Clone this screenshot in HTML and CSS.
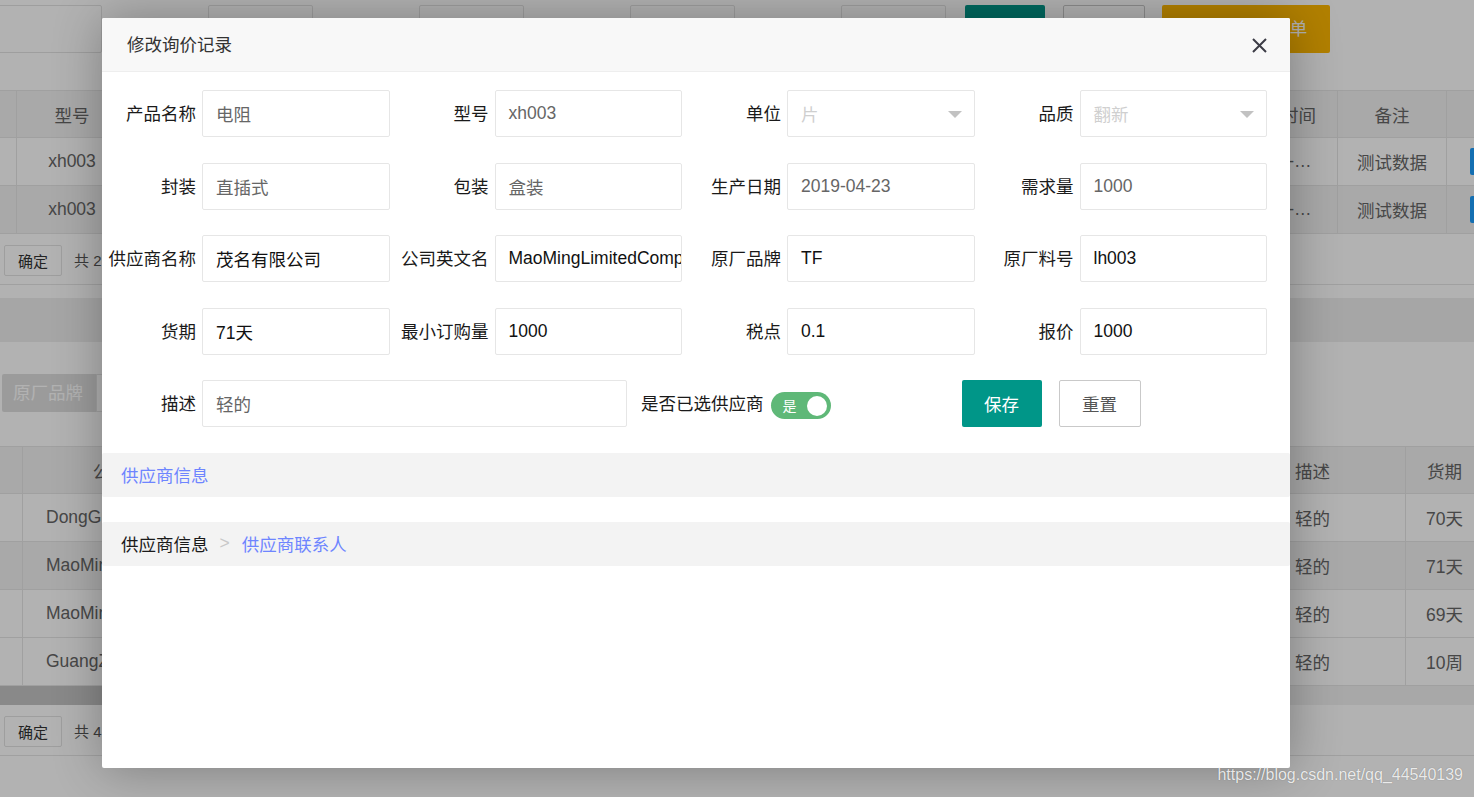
FILE: index.html
```html
<!DOCTYPE html>
<html lang="zh-CN">
<head>
<meta charset="utf-8">
<title>修改询价记录</title>
<link rel="stylesheet" href="styles.css">
</head>
<body>
<div class="page">
  <div class="toolbar">
    <div class="tb-input"></div>
    <div class="tb-label"></div>
    <div class="tb-input"></div>
    <div class="tb-label"></div>
    <div class="tb-input"></div>
    <div class="tb-label"></div>
    <div class="tb-input"></div>
    <div class="tb-label"></div>
    <div class="tb-input"></div>
    <div class="tb-btn teal"></div>
    <div class="tb-btn plain"></div>
    <div class="tb-btn warm">批量生成询价单</div>
  </div>
  <div class="gap-a"></div>

  <div class="tbl">
    <div class="tr th">
      <div class="td w17"></div>
      <div class="td w111">型号</div>
      <div class="td w531"></div>
      <div class="td w531"></div>
      <div class="td wtime">最后更新时间</div>
      <div class="td w109">备注</div>
      <div class="td wop"></div>
    </div>
    <div class="tr">
      <div class="td w17"></div>
      <div class="td w111">xh003</div>
      <div class="td w531"></div>
      <div class="td w531"></div>
      <div class="td wtime"><span class="ell">2019-04-23 10:21:35</span></div>
      <div class="td w109">测试数据</div>
      <div class="td wop"><span class="mini-btn">编辑</span></div>
    </div>
    <div class="tr hl">
      <div class="td w17"></div>
      <div class="td w111">xh003</div>
      <div class="td w531"></div>
      <div class="td w531"></div>
      <div class="td wtime"><span class="ell">2019-04-23 10:25:02</span></div>
      <div class="td w109">测试数据</div>
      <div class="td wop"><span class="mini-btn">编辑</span></div>
    </div>
  </div>

  <div class="pager">
    <span class="pg-btn">确定</span>
    <span class="pg-count">共 2</span>
  </div>
  <div class="gap-b"></div>
  <div class="band"></div>

  <div class="filter">
    <div class="filter-label">原厂品牌</div>
    <div class="filter-input"></div>
  </div>

  <div class="tbl">
    <div class="tr th">
      <div class="td w23"></div>
      <div class="td w228">公司英文名</div>
      <div class="td w1029"></div>
      <div class="td w126 left">描述</div>
      <div class="td w78">货期</div>
    </div>
    <div class="tr">
      <div class="td w23"></div>
      <div class="td w228 name">DongGuanLimitedCompany</div>
      <div class="td w1029"></div>
      <div class="td w126 left">轻的</div>
      <div class="td w78">70天</div>
    </div>
    <div class="tr hl">
      <div class="td w23"></div>
      <div class="td w228 name">MaoMingLimitedCompany</div>
      <div class="td w1029"></div>
      <div class="td w126 left">轻的</div>
      <div class="td w78">71天</div>
    </div>
    <div class="tr">
      <div class="td w23"></div>
      <div class="td w228 name">MaoMingLimitedCompany</div>
      <div class="td w1029"></div>
      <div class="td w126 left">轻的</div>
      <div class="td w78">69天</div>
    </div>
    <div class="tr">
      <div class="td w23"></div>
      <div class="td w228 name">GuangZhouLimitedCompany</div>
      <div class="td w1029"></div>
      <div class="td w126 left">轻的</div>
      <div class="td w78">10周</div>
    </div>
  </div>
  <div class="scroll"><div class="thumb"></div></div>
  <div class="pager">
    <span class="pg-btn">确定</span>
    <span class="pg-count">共 4</span>
  </div>
</div>

<div class="shade"></div>

<div class="modal">
  <div class="modal-head">
    <span class="modal-title">修改询价记录</span>
    <span class="close">
      <svg width="15" height="15" viewBox="0 0 15 15"><path d="M1 1 L14 14 M14 1 L1 14" stroke="#3c3c46" stroke-width="2" fill="none"/></svg>
    </span>
  </div>
  <div class="modal-body">
    <div class="form-grid">
      <div class="field"><span class="field-label">产品名称</span><div class="inp ro">电阻</div></div>
      <div class="field"><span class="field-label">型号</span><div class="inp ro">xh003</div></div>
      <div class="field"><span class="field-label">单位</span><div class="inp sel"><span>片</span><span class="arrow"></span></div></div>
      <div class="field"><span class="field-label">品质</span><div class="inp sel"><span>翻新</span><span class="arrow"></span></div></div>

      <div class="field"><span class="field-label">封装</span><div class="inp ro">直插式</div></div>
      <div class="field"><span class="field-label">包装</span><div class="inp ro">盒装</div></div>
      <div class="field"><span class="field-label">生产日期</span><div class="inp ro">2019-04-23</div></div>
      <div class="field"><span class="field-label">需求量</span><div class="inp ro">1000</div></div>

      <div class="field"><span class="field-label">供应商名称</span><div class="inp">茂名有限公司</div></div>
      <div class="field"><span class="field-label">公司英文名</span><div class="inp">MaoMingLimitedCompany</div></div>
      <div class="field"><span class="field-label">原厂品牌</span><div class="inp">TF</div></div>
      <div class="field"><span class="field-label">原厂料号</span><div class="inp">lh003</div></div>

      <div class="field"><span class="field-label">货期</span><div class="inp">71天</div></div>
      <div class="field"><span class="field-label">最小订购量</span><div class="inp">1000</div></div>
      <div class="field"><span class="field-label">税点</span><div class="inp">0.1</div></div>
      <div class="field"><span class="field-label">报价</span><div class="inp">1000</div></div>
    </div>
    <div class="row5">
      <span class="field-label">描述</span>
      <div class="inp ro wide">轻的</div>
      <span class="sw-label">是否已选供应商</span>
      <span class="switch"><span class="sw-text">是</span><span class="knob"></span></span>
      <span class="btn-save">保存</span>
      <span class="btn-reset">重置</span>
    </div>
  </div>
  <div class="section first"><span class="link">供应商信息</span></div>
  <div class="section"><span class="crumb-cur">供应商信息</span><span class="crumb-sep">&gt;</span><span class="link">供应商联系人</span></div>
</div>

<div class="wm">https://blog.csdn.net/qq_44540139</div>
</body>
</html>
```

FILE: styles.css
```css
html, body {
  margin: 0;
  padding: 0;
}
body {
  width: 1474px;
  height: 797px;
  overflow: hidden;
  position: relative;
  background: #fff;
  font-family: "Liberation Sans", "Noto Sans CJK SC", sans-serif;
  font-size: 17.5px;
  color: #666;
}

/* ---------- background page ---------- */
.page {
  width: 1474px;
  overflow: hidden;
}
.toolbar {
  display: flex;
  align-items: flex-start;
  height: 53px;
  padding-top: 5px;
  box-sizing: border-box;
  margin-left: -3px;
}
.tb-input {
  flex: none;
  width: 105px;
  height: 48px;
  box-sizing: border-box;
  border: 1px solid #e2e2e2;
  border-radius: 2px;
}
.tb-label {
  flex: none;
  width: 106px;
  height: 48px;
}
.tb-btn {
  flex: none;
  height: 48px;
  line-height: 48px;
  border-radius: 2px;
  box-sizing: border-box;
  text-align: center;
  color: #fff;
  white-space: nowrap;
}
.tb-btn.teal { width: 80px; margin-left: 19px; background: #009688; }
.tb-btn.plain { width: 82px; margin-left: 18px; border: 1px solid #c9c9c9; background: #fff; }
.tb-btn.warm { width: 168px; margin-left: 17px; background: #ffb800; }

.gap-a { height: 37px; }

.tbl {
  border-top: 1px solid #e6e6e6;
  width: 1600px;
}
.tr {
  display: flex;
  height: 48px;
  box-sizing: border-box;
  border-bottom: 1px solid #e6e6e6;
}
.tr.th { height: 47px; background: #f2f2f2; }
.tr.hl { background: #f2f2f2; }
.td {
  flex: none;
  height: 100%;
  box-sizing: border-box;
  border-right: 1px solid #e6e6e6;
  display: flex;
  align-items: center;
  justify-content: center;
  white-space: nowrap;
  overflow: hidden;
}
.td.left { justify-content: flex-start; padding-left: 15px; }
.td.name { justify-content: flex-start; padding-left: 23px; }
.w17 { width: 17px; }
.w23 { width: 23px; }
.w111 { width: 111px; }
.w531 { width: 531px; }
.wtime { width: 148px; justify-content: flex-start; padding: 0 20px 0 34px; }
.th .wtime { justify-content: center; padding: 0; }
.w109 { width: 109px; }
.wop { width: 153px; justify-content: flex-start; padding-left: 23px; }
.w228 { width: 228px; }
.w1029 { width: 1029px; }
.w126 { width: 126px; }
.w78 { width: 78px; }
.ell {
  display: block;
  min-width: 0;
  flex: 1 1 auto;
  overflow: hidden;
  text-overflow: ellipsis;
}
.mini-btn {
  display: inline-flex;
  align-items: center;
  height: 27px;
  padding: 0 10px;
  border-radius: 2px;
  background: #1e9fff;
  color: #fff;
  font-size: 15px;
}

.pager {
  height: 51px;
  box-sizing: border-box;
  border-bottom: 1px solid #e6e6e6;
  padding-top: 11px;
  display: flex;
  align-items: flex-start;
  font-size: 15px;
}
.pg-btn {
  margin-left: 4px;
  width: 58px;
  height: 31px;
  box-sizing: border-box;
  border: 1px solid #e2e2e2;
  border-radius: 2px;
  display: flex;
  align-items: center;
  justify-content: center;
  color: #333;
  background: #fff;
}
.pg-count {
  margin-left: 12px;
  line-height: 31px;
  color: #555;
}
.gap-b { height: 13px; }
.band { height: 44px; background: #eee; }

.filter {
  height: 104px;
  box-sizing: border-box;
  padding-top: 32px;
  display: flex;
  align-items: flex-start;
}
.filter-label {
  margin-left: 2px;
  width: 94px;
  height: 38px;
  box-sizing: border-box;
  padding-left: 11px;
  line-height: 38px;
  background: #dfdfdf;
  color: #fff;
  border-radius: 2px 0 0 2px;
}
.filter-input {
  width: 200px;
  height: 38px;
  box-sizing: border-box;
  border: 1px solid #e6e6e6;
  background: #fff;
}

.scroll {
  height: 19px;
  background: #f1f1f1;
}
.thumb {
  width: 700px;
  height: 100%;
  background: #c4c4c4;
}

/* ---------- overlay ---------- */
.shade {
  position: absolute;
  left: 0;
  top: 0;
  right: 0;
  bottom: 0;
  background: rgba(0, 0, 0, 0.3);
}

.modal {
  position: absolute;
  left: 102px;
  top: 18px;
  width: 1188px;
  height: 750px;
  background: #fff;
  border-radius: 2px;
  box-shadow: 1px 1px 50px rgba(0, 0, 0, 0.3);
  overflow: hidden;
  color: #1a1a1a;
}
.modal-head {
  height: 54px;
  box-sizing: border-box;
  border-bottom: 1px solid #eee;
  background: #f8f8f8;
  display: flex;
  align-items: center;
  justify-content: space-between;
  padding: 0 23px 0 25px;
}
.modal-title {
  color: #333;
  line-height: 20px;
}
.close {
  display: flex;
  width: 15px;
  height: 15px;
  margin-top: 2px;
}

.modal-body {
  padding-top: 18px;
}
.form-grid {
  display: grid;
  grid-template-columns: repeat(4, 292.5px);
  row-gap: 25.5px;
}
.field {
  display: flex;
  align-items: center;
  height: 47px;
}
.field-label {
  flex: none;
  width: 100px;
  padding-right: 6px;
  padding-bottom: 2px;
  box-sizing: border-box;
  text-align: right;
  white-space: nowrap;
  color: #1a1a1a;
}
.inp {
  flex: none;
  width: 187.5px;
  height: 47px;
  box-sizing: border-box;
  border: 1px solid #e6e6e6;
  border-radius: 2px;
  padding: 0 12px 0 13px;
  display: flex;
  align-items: center;
  white-space: nowrap;
  overflow: hidden;
  background: #fff;
  color: #111;
}
.inp.ro { color: #666; }
.inp.sel {
  color: #cfcfcf;
  justify-content: space-between;
}
.inp.wide { width: 424.5px; }
.arrow {
  flex: none;
  width: 0;
  height: 0;
  border-left: 7px solid transparent;
  border-right: 7px solid transparent;
  border-top: 7px solid #c2c2c2;
  margin-top: 2px;
}

.row5 {
  display: flex;
  align-items: center;
  height: 47px;
  margin-top: 25.5px;
}
.sw-label {
  margin-left: 14.5px;
  padding-bottom: 2px;
  white-space: nowrap;
}
.switch {
  margin-left: 7px;
  margin-top: 4px;
  width: 60px;
  height: 27px;
  box-sizing: border-box;
  border-radius: 14px;
  background: #5fb878;
  display: flex;
  align-items: center;
  justify-content: space-between;
  padding: 0 4px 0 12px;
  color: #fff;
  font-size: 14px;
}
.sw-text { line-height: 16px; }
.knob {
  width: 20px;
  height: 20px;
  border-radius: 50%;
  background: #fff;
}
.btn-save {
  margin-left: 131px;
  width: 80px;
  height: 47px;
  border-radius: 2px;
  background: #009688;
  color: #fff;
  display: flex;
  align-items: center;
  justify-content: center;
}
.btn-reset {
  margin-left: 17px;
  width: 82px;
  height: 47px;
  box-sizing: border-box;
  border: 1px solid #c9c9c9;
  border-radius: 2px;
  background: #fff;
  color: #555;
  display: flex;
  align-items: center;
  justify-content: center;
}

.section {
  margin-top: 25px;
  height: 44px;
  background: #f3f3f3;
  border-radius: 2px;
  display: flex;
  align-items: center;
  padding-left: 19px;
}
.section.first { margin-top: 25.5px; }
.link { color: #6e85ff; }
.crumb-cur { color: #1a1a1a; }
.crumb-sep {
  color: #c8c8c8;
  margin: 0 12px 0 11px;
}

.wm {
  position: absolute;
  right: 11px;
  top: 766px;
  font-family: "Liberation Sans", sans-serif;
  font-size: 16px;
  color: rgba(255, 255, 255, 0.85);
  text-shadow: 0 0 1px rgba(0, 0, 0, 0.35);
}
```
